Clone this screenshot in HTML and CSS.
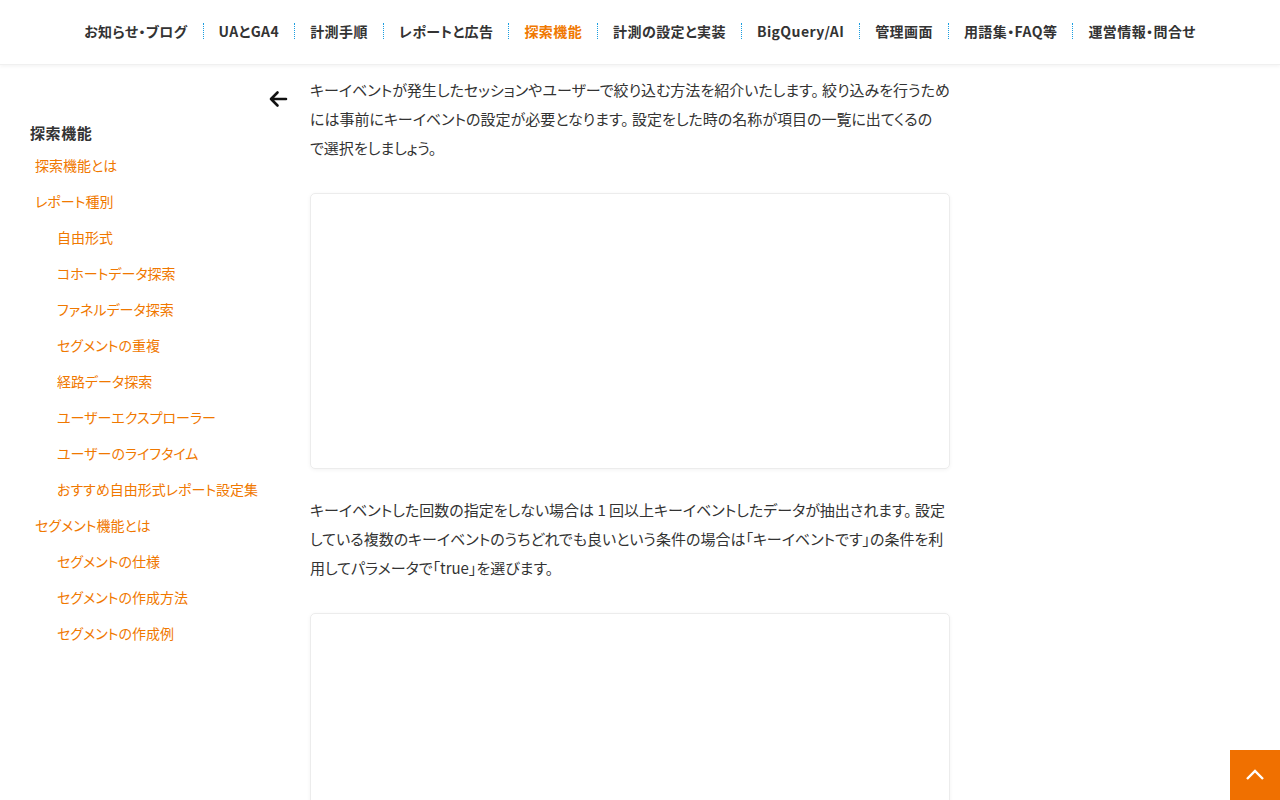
FILE: index.html
```html
<!DOCTYPE html>
<html lang="ja">
<head>
  <meta charset="UTF-8" />
  <meta name="viewport" content="width=device-width, initial-scale=1" />
  <title>探索機能 | キーイベントで絞り込む</title>
  <link rel="stylesheet" href="styles.css">
</head>
<body>
  <header class="site-header">
    <nav class="global-nav">
      <a href="#">お知らせ・ブログ</a>
      <a href="#">UAとGA4</a>
      <a href="#">計測手順</a>
      <a href="#">レポートと広告</a>
      <a href="#" class="current">探索機能</a>
      <a href="#">計測の設定と実装</a>
      <a href="#">BigQuery/AI</a>
      <a href="#">管理画面</a>
      <a href="#">用語集・FAQ等</a>
      <a href="#">運営情報・問合せ</a>
    </nav>
  </header>

  <div class="page">
    <aside class="sidebar">
      <div class="back-row">
        <svg class="back-arrow" width="20" height="18" viewBox="0 0 20 18">
          <path d="M18 9H3M9.5 2.5L3 9l6.5 6.5" fill="none" stroke="#111" stroke-width="2.6" stroke-linecap="round" stroke-linejoin="round"/>
        </svg>
      </div>
      <h2 class="side-title">探索機能</h2>
      <ul class="side-menu">
        <li><a href="#">探索機能とは</a></li>
        <li><a href="#">レポート種別</a></li>
        <li class="sub"><a href="#">自由形式</a></li>
        <li class="sub"><a href="#">コホートデータ探索</a></li>
        <li class="sub"><a href="#">ファネルデータ探索</a></li>
        <li class="sub"><a href="#">セグメントの重複</a></li>
        <li class="sub"><a href="#">経路データ探索</a></li>
        <li class="sub"><a href="#">ユーザーエクスプローラー</a></li>
        <li class="sub"><a href="#">ユーザーのライフタイム</a></li>
        <li class="sub"><a href="#">おすすめ自由形式レポート設定集</a></li>
        <li><a href="#">セグメント機能とは</a></li>
        <li class="sub"><a href="#">セグメントの仕様</a></li>
        <li class="sub"><a href="#">セグメントの作成方法</a></li>
        <li class="sub"><a href="#">セグメントの作成例</a></li>
      </ul>
    </aside>

    <main class="content">
      <p>キーイベントが発生したセッションやユーザーで絞り込む方法を紹介いたします。 絞り込みを行うため<br>には事前にキーイベントの設定が必要となります。 設定をした時の名称が項目の一覧に出てくるの<br>で選択をしましょう。</p>
      <div class="figure"></div>
      <p>キーイベントした回数の指定をしない場合は 1 回以上キーイベントしたデータが抽出されます。 設定<br>している複数のキーイベントのうちどれでも良いという条件の場合は「キーイベントです」の条件を利<br>用してパラメータで「true」を選びます。</p>
      <div class="figure"></div>
    </main>
  </div>

  <a href="#" class="to-top">
    <svg width="20" height="12" viewBox="0 0 20 12">
      <path d="M2 10l8-8 8 8" fill="none" stroke="#fff" stroke-width="2.4"/>
    </svg>
  </a>
</body>
</html>
```

FILE: styles.css
```css
body {
  margin: 0;
  font-family: "Noto Sans CJK JP", "Noto Sans", sans-serif;
  font-feature-settings: "palt";
  color: #333;
  background: #fff;
}
a {
  text-decoration: none;
}

/* header */
.site-header {
  height: 64px;
  border-bottom: 1px solid #f0f0f0;
  box-shadow: 0 2px 3px rgba(0, 0, 0, 0.04);
}
.global-nav {
  display: flex;
  justify-content: center;
  align-items: center;
  height: 62px;
}
.global-nav a {
  color: #333;
  font-size: 14px;
  font-weight: 700;
  letter-spacing: 0.03em;
  padding: 0 15px;
  line-height: 16px;
  border-left: 1px dotted #1a9de0;
}
.global-nav a:first-child {
  border-left: none;
}
.global-nav a.current {
  color: #f07800;
}

/* layout */
.page {
  display: flex;
}
.sidebar {
  width: 290px;
  flex-shrink: 0;
  padding-top: 25px;
}
.back-row {
  display: flex;
  justify-content: flex-end;
  padding-right: 2px;
}
.side-title {
  margin: 15px 0 4px 30px;
  font-size: 15px;
  font-weight: 700;
  color: #333;
  line-height: 20px;
  letter-spacing: 0.04em;
}
.side-menu {
  list-style: none;
  margin: 0;
  padding: 0 0 0 35px;
}
.side-menu li {
  font-size: 14px;
  line-height: 20px;
  padding: 8px 0;
}
.side-menu li.sub {
  padding-left: 22px;
}
.side-menu a {
  color: #f07800;
}

.content {
  width: 640px;
  margin-left: 20px;
  padding-top: 10px;
}
.content p {
  margin: 0 0 31px;
  font-size: 15px;
  line-height: 29px;
  color: #333;
  white-space: nowrap;
}
.figure {
  height: 274px;
  border: 1px solid #ececec;
  border-radius: 5px;
  box-shadow: 0 1px 4px rgba(0, 0, 0, 0.05);
  margin-bottom: 26px;
}

.to-top {
  position: fixed;
  right: 0;
  bottom: 0;
  width: 50px;
  height: 50px;
  background: #f07000;
  display: flex;
  align-items: center;
  justify-content: center;
}
```
